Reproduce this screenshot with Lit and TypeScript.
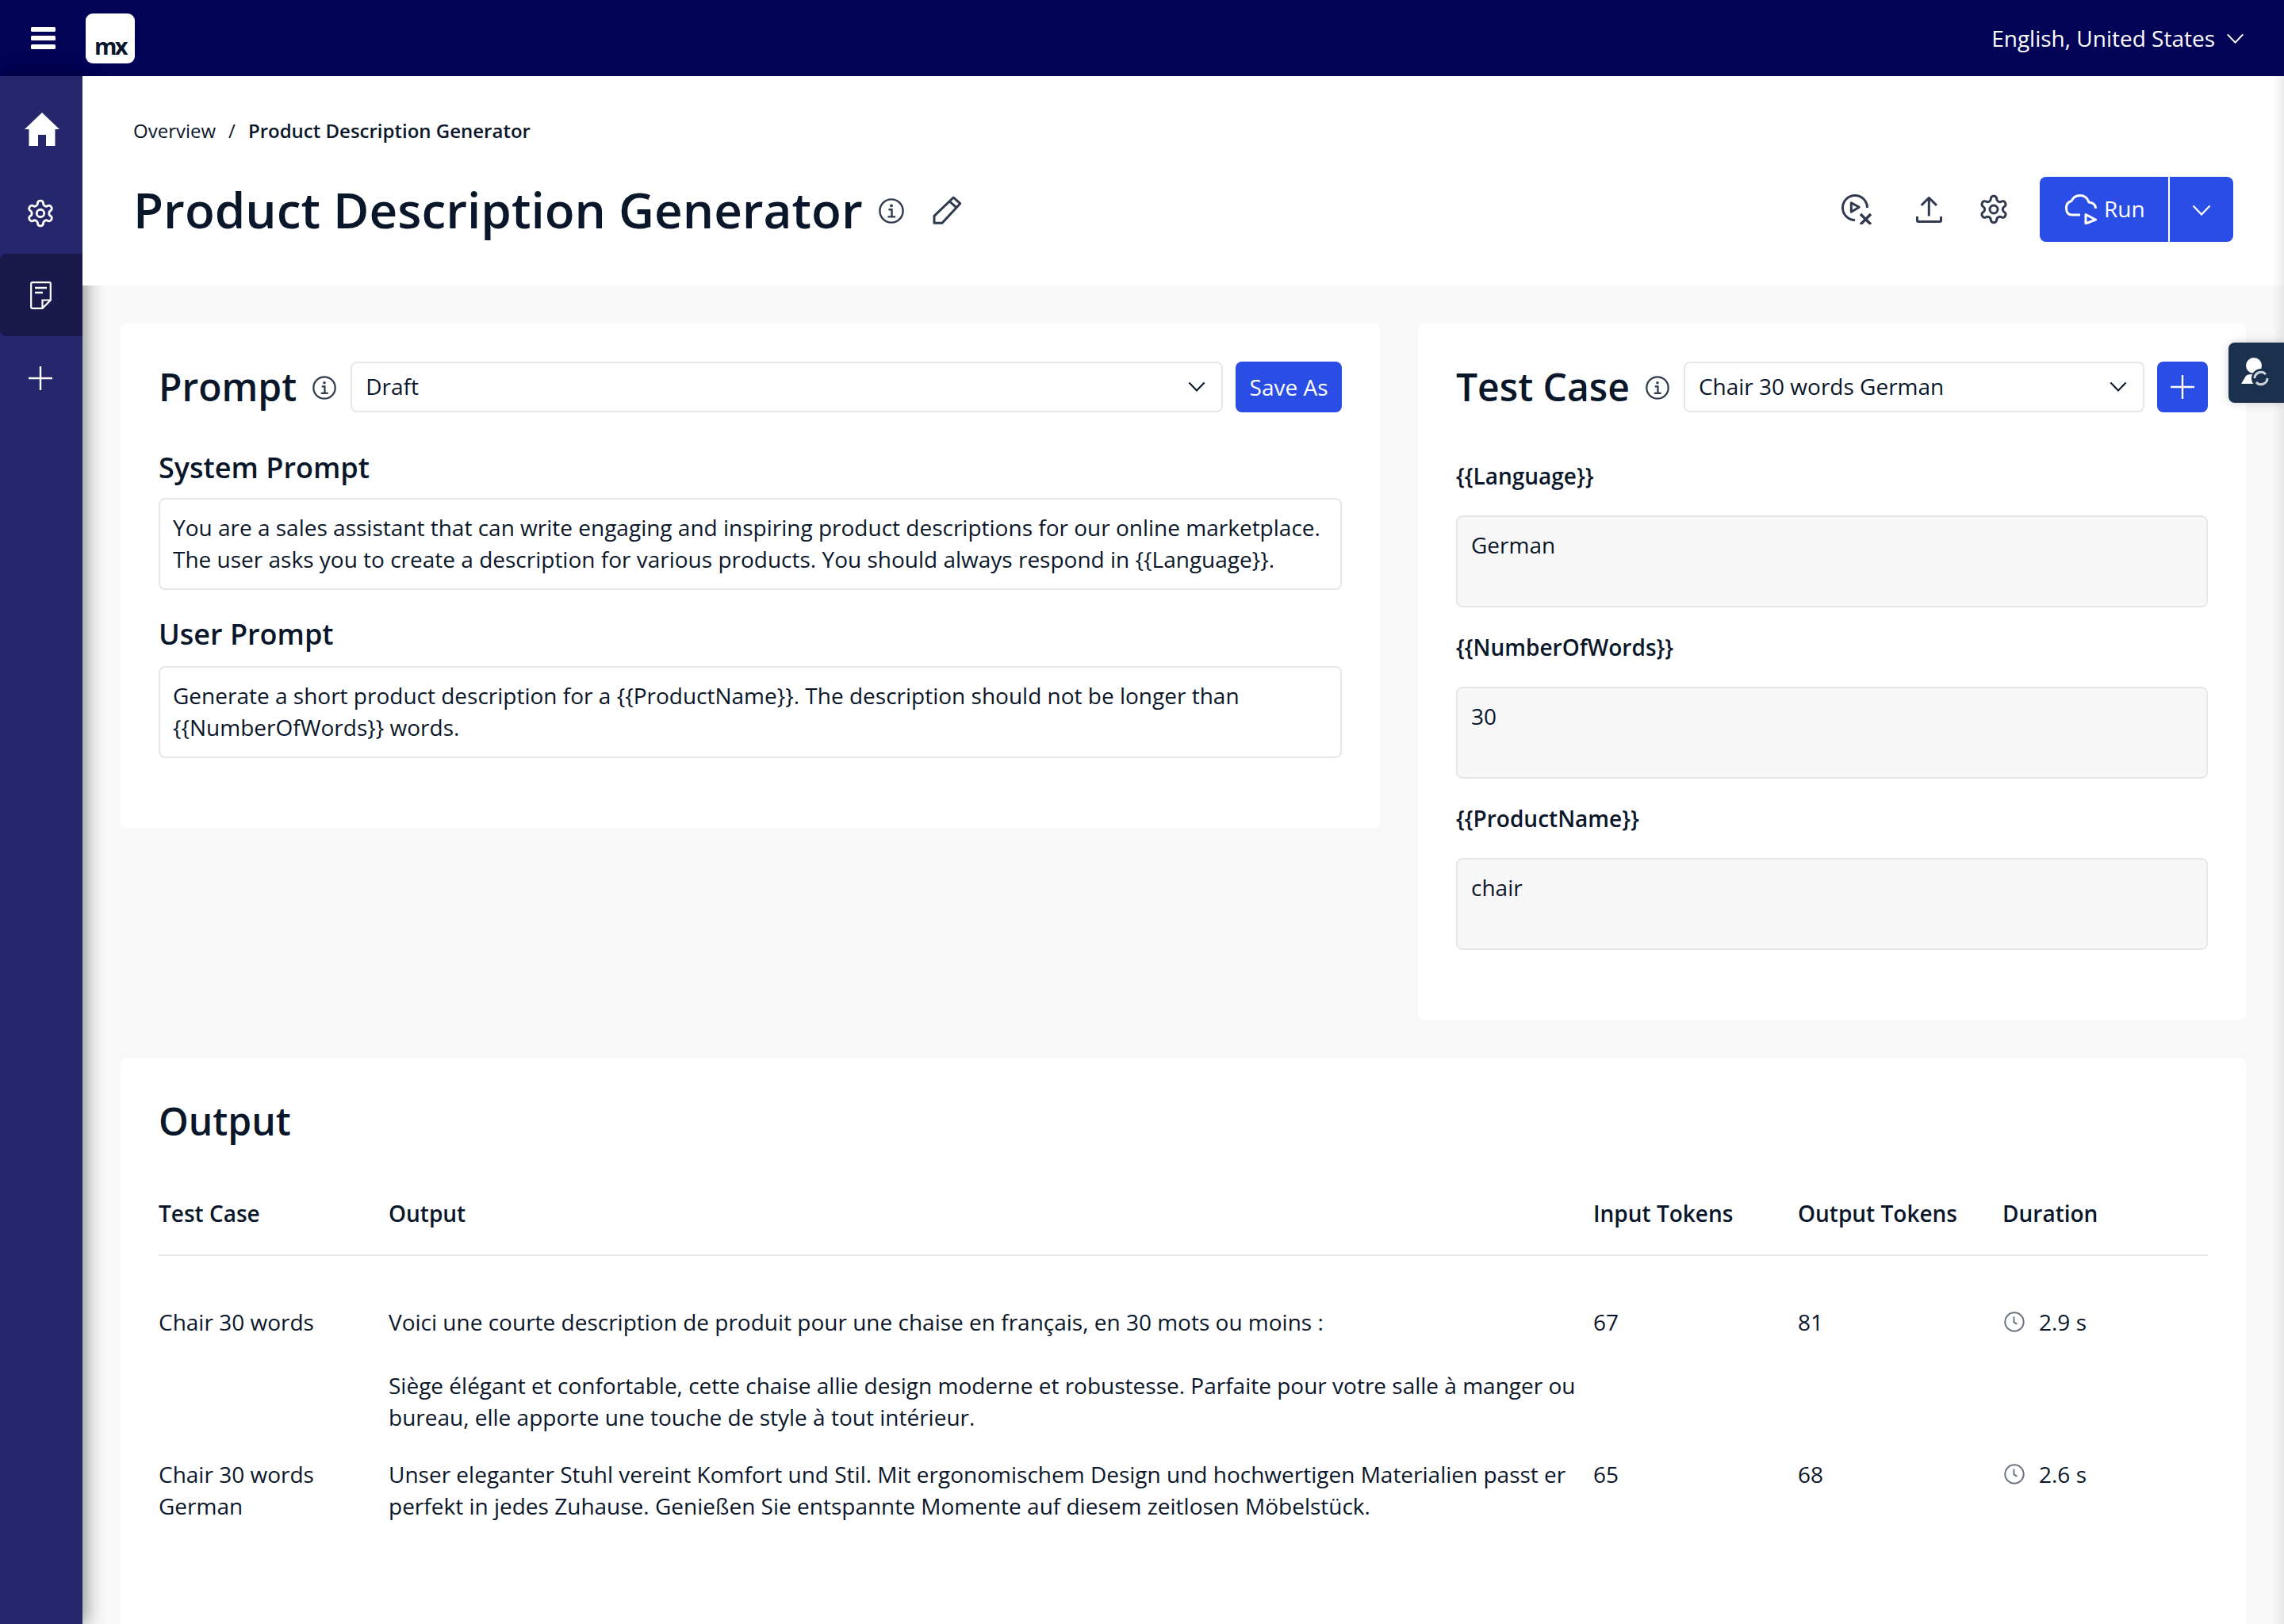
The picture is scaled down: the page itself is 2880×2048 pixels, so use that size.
import { css, html, LitElement, svg } from 'lit';
import { customElement } from 'lit/decorators.js';

const gearPath = 'M12.22 2h-.44a2 2 0 0 0-2 2v.18a2 2 0 0 1-1 1.73l-.43.25a2 2 0 0 1-2 0l-.15-.08a2 2 0 0 0-2.73.73l-.22.38a2 2 0 0 0 .73 2.73l.15.1a2 2 0 0 1 1 1.72v.51a2 2 0 0 1-1 1.74l-.15.09a2 2 0 0 0-.73 2.73l.22.38a2 2 0 0 0 2.73.73l.15-.08a2 2 0 0 1 2 0l.43.25a2 2 0 0 1 1 1.73V20a2 2 0 0 0 2 2h.44a2 2 0 0 0 2-2v-.18a2 2 0 0 1 1-1.73l.43-.25a2 2 0 0 1 2 0l.15.08a2 2 0 0 0 2.73-.73l.22-.39a2 2 0 0 0-.73-2.73l-.15-.08a2 2 0 0 1-1-1.74v-.5a2 2 0 0 1 1-1.74l.15-.09a2 2 0 0 0 .73-2.73l-.22-.38a2 2 0 0 0-2.73-.73l-.15.08a2 2 0 0 1-2 0l-.43-.25a2 2 0 0 1-1-1.73V4a2 2 0 0 0-2-2z';

const gear = html`<svg viewBox="0 0 24 24" fill="none" stroke="currentColor" stroke-width="1.8">
  ${svg`<path d=${gearPath}/><circle cx="12" cy="12" r="3"/>`}
</svg>`;

const chevron = html`<svg class="chev" viewBox="0 0 24 14" fill="none" stroke="currentColor" stroke-width="2.2">
  ${svg`<path d="M1.5 1.5 12 12.5 22.5 1.5"/>`}
</svg>`;

const info = html`<svg class="info" viewBox="0 0 32 32" fill="none" stroke="currentColor" stroke-width="2.4">
  ${svg`<circle cx="16" cy="16" r="14.6"/>
  <path d="M12.5 14.200h4v8.800M11.500 23.400h9.500" />
  <circle cx="16" cy="9.400" r="1.900" fill="currentColor" stroke="none"/>`}
</svg>`;

const plus = html`<svg class="plus" viewBox="0 0 32 32" fill="none" stroke="currentColor" stroke-width="2.4">
  ${svg`<path d="M16 1v30M1 16h30"/>`}
</svg>`;

const clock = html`<svg class="clock" viewBox="0 0 24 24" fill="none" stroke="#6b7280" stroke-width="1.8">
  ${svg`<circle cx="12" cy="12" r="10.8"/><path d="M11.500 6v6.400l3.600 2.200"/>`}
</svg>`;

@customElement('app-root')
export class AppRoot extends LitElement {
  static styles = css`
    :host {
      display: block;
      width: 2880px;
      height: 2048px;
      overflow: hidden;
      font-family: 'Open Sans', sans-serif;
      font-size: 28px;
      line-height: 40px;
      color: #0a1629;
      background: #f8f8f8;
      position: relative;
    }
    svg { display: block; flex: none; }
    .topbar {
      height: 96px;
      background: #020257;
      color: #fff;
      display: flex;
      align-items: center;
      padding: 0 50px 0 39px;
    }
    .burger { width: 31px; height: 28px; }
    .logo {
      width: 62px;
      height: 63px;
      margin-left: 38px;
      background: #fff;
      border-radius: 9px;
      display: flex;
      align-items: flex-end;
      justify-content: center;
      color: #0a1629;
      font-size: 29px;
      font-weight: 700;
      line-height: 30px;
      letter-spacing: -2.5px;
      padding-bottom: 7px;
      box-sizing: border-box;
    }
    .lang {
      margin-left: auto;
      display: flex;
      align-items: center;
      gap: 14px;
    }
    .lang .chev { width: 23px; height: 13px; }
    .layout { display: flex; height: 1952px; }
    .sidebar {
      width: 104px;
      flex: none;
      background: #25266b;
      color: #fff;
      padding-top: 16px;
      box-shadow: 4px 0 22px rgba(0, 0, 0, 0.45);
      position: relative;
      z-index: 1;
    }
    .nav-item {
      height: 104px;
      display: flex;
      align-items: center;
      justify-content: center;
      padding-right: 2px;
      box-sizing: border-box;
    }
    .nav-item.active { background: #191a4b; border-radius: 8px 0 0 8px; }
    .nav-home { width: 44px; height: 42px; margin-left: 4px; margin-bottom: 2px; }
    .nav-gear { width: 38px; height: 38px; margin-top: 2px; }
    .nav-doc { width: 27px; height: 35px; }
    .nav-item .plus { width: 32px; height: 32px; margin-top: 2px; }
    .main { flex: 1; min-width: 0; position: relative; }
    .page-head {
      height: 264px;
      box-sizing: border-box;
      background: #fff;
      padding: 49px 64px 0 64px;
      position: relative;
      z-index: 2;
    }
    .crumbs { font-size: 24px; display: flex; gap: 16px; }
    .crumbs b { font-weight: 600; }
    .title-row {
      display: flex;
      align-items: center;
      height: 82px;
      margin-top: 38px;
    }
    h1 {
      margin: 0;
      font-size: 62px;
      line-height: 82px;
      font-weight: 600;
    }
    .title-row .info { width: 32px; height: 32px; margin-left: 20px; color: #2f3a4e; margin-top: 3px; }
    .pencil { width: 37px; height: 37px; margin-left: 36px; color: #2f3a4e; margin-top: 3px; }
    .actions {
      margin-left: auto;
      display: flex;
      align-items: center;
      color: #2f3a4e;
    }
    .act-play { width: 38px; height: 38px; }
    .act-up { width: 33px; height: 33px; margin-left: 56px; }
    .act-gear { width: 40px; height: 40px; margin-left: 45px; }
    .run {
      margin-left: 38px;
      height: 82px;
      width: 244px;
      display: flex;
      background: #2a4de6;
      color: #fff;
      border-radius: 8px;
    }
    .run-main {
      width: 164px;
      box-sizing: border-box;
      display: flex;
      align-items: center;
      padding-left: 32px;
      gap: 9px;
      border-right: 2px solid #fff;
    }
    .run-main svg { width: 40px; height: 38px; }
    .run-main span { padding-bottom: 2px; }
    .run-more { flex: 1; display: flex; align-items: center; justify-content: center; }
    .run-more .chev { width: 24px; height: 14px; margin-top: 2px; }
    .content {
      padding: 48px;
      display: grid;
      grid-template-columns: 1588px 1044px;
      gap: 48px;
      align-items: start;
    }
    .card {
      background: #fff;
      border-radius: 8px;
      padding: 48px 48px 88px;
    }
    .card.wide { grid-column: 1 / 3; height: 800px; }
    .card-head {
      display: flex;
      align-items: center;
      height: 64px;
    }
    h2 {
      margin: 0;
      font-size: 48px;
      line-height: 64px;
      font-weight: 600;
    }
    .card-head .info { width: 30px; height: 30px; margin-left: 20px; color: #2f3a4e; margin-top: 2px; }
    .select {
      flex: 1;
      height: 64px;
      box-sizing: border-box;
      margin-left: 18px;
      border: 2px solid #e7e7e9;
      border-radius: 8px;
      display: flex;
      align-items: center;
      justify-content: space-between;
      padding: 0 20px 2px 17px;
    }
    .select .chev { width: 22px; height: 13px; }
    .btn {
      margin-left: 16px;
      height: 64px;
      background: #2a4de6;
      color: #fff;
      border-radius: 8px;
      display: flex;
      align-items: center;
      justify-content: center;
      padding: 0 17.5px;
    }
    .btn.square { width: 64px; padding: 0; }
    .btn .plus { width: 32px; height: 32px; }
    h3 {
      margin: 46px 0 14px;
      font-size: 36px;
      line-height: 48px;
      font-weight: 600;
    }
    .prompt + h3 { margin-top: 32px; margin-bottom: 16px; }
    .prompt {
      border: 2px solid #e7e7e9;
      border-radius: 8px;
      padding: 15px 16px 17px;
    }
    .field-label {
      margin: 30px 0;
      font-weight: 600;
    }
    .card-head + .field-label { margin-top: 60px; }
    .field {
      height: 116px;
      box-sizing: border-box;
      background: #f7f7f7;
      border: 2px solid #e7e7e9;
      border-radius: 8px;
      padding: 15px 17px;
    }
    .field + .field-label { margin-top: 30px; }
    .table {
      margin-top: 64px;
      display: grid;
      grid-template-columns: 290px 1519px 258px 258px 259px;
    }
    .th {
      font-weight: 600;
      padding-bottom: 32px;
      border-bottom: 2px solid #e7e7e9;
    }
    .spacer { grid-column: 1 / 6; height: 47px; }
    .td { padding: 16px 0; }
    .td p { margin: 0 0 40px; }
    .td p:last-child { margin: 0; }
    .dur { display: flex; align-items: flex-start; gap: 18px; padding-left: 2px; }
    .clock { width: 26px; height: 26px; margin-top: 7px; }
    .edge {
      position: absolute;
      top: 96px;
      right: 0;
      bottom: 0;
      width: 14px;
      background: linear-gradient(to right, rgba(0, 0, 0, 0), rgba(0, 0, 0, 0.07));
      z-index: 3;
    }
    .tab {
      position: absolute;
      top: 432px;
      right: 0;
      width: 70px;
      height: 76px;
      background: #1b304d;
      border-radius: 8px 0 0 8px;
      display: flex;
      align-items: center;
      justify-content: center;
      z-index: 4;
      box-shadow: 0 0 12px rgba(0, 0, 0, 0.18);
    }
    .tab svg { width: 40px; height: 40px; }
  `;

  render() {
    return html`
      <header class="topbar">
        <svg class="burger" viewBox="0 0 31 28" fill="#fff">
          <rect y="0" width="31" height="6" rx="1.5"/>
          <rect y="11" width="31" height="6" rx="1.5"/>
          <rect y="22" width="31" height="6" rx="1.5"/>
        </svg>
        <div class="logo">mx</div>
        <div class="lang">English, United States ${chevron}</div>
      </header>
      <div class="layout">
        <nav class="sidebar">
          <div class="nav-item">
            <svg class="nav-home" viewBox="0 0 44 42" fill="#fff">
              <path d="M22 0 44 21H38.500V42H27V28H17V42H5.500V21H0Z"/>
            </svg>
          </div>
          <div class="nav-item"><span class="nav-gear">${gear}</span></div>
          <div class="nav-item active">
            <svg class="nav-doc" viewBox="0 0 27 35" fill="none" stroke="#fff" stroke-width="2.2">
              <path d="M3 1.200H24.500Q25.800 1.200 25.800 2.500V23.500L15.500 33.800H3Q1.200 33.800 1.200 32V3Q1.200 1.200 3 1.200Z"/>
              <path d="M15.500 33.500V23.500H25.500"/>
              <path d="M6 8H21M6 14H16" stroke-width="2.600"/>
            </svg>
          </div>
          <div class="nav-item">${plus}</div>
        </nav>
        <main class="main">
          <section class="page-head">
            <div class="crumbs"><span>Overview</span><span>/</span><b>Product Description Generator</b></div>
            <div class="title-row">
              <h1>Product Description Generator</h1>
              ${info}
              <svg class="pencil" viewBox="-2 -2 37 37" fill="none" stroke="currentColor" stroke-width="3" stroke-linejoin="round">
                <path d="M0 32.300V23.300L24.300 0 32.700 7.700 10 32.300Z"/>
                <path d="M19.300 5 28.700 13.300"/>
              </svg>
              <div class="actions">
                <svg class="act-play" viewBox="0 0 38 38" fill="none" stroke="currentColor" stroke-width="3" stroke-linejoin="round">
                  <path d="M17 32.500A15.500 15.500 0 1 1 32.500 17"/>
                  <path d="M12.300 10.700 22.300 16.300 12.300 22.300Z"/>
                  <path d="M24 25 37 38M37 25 24 38" stroke-width="3.400"/>
                </svg>
                <svg class="act-up" viewBox="0 0 33 33" fill="none" stroke="currentColor" stroke-width="3">
                  <path d="M16.300 24.500V1.500M6.700 11 16.300 1.500 26 11"/>
                  <path d="M1.500 25V30Q1.500 31.500 3 31.500H30Q31.500 31.500 31.500 30V25"/>
                </svg>
                <span class="act-gear">${gear}</span>
                <div class="run">
                  <div class="run-main">
                    <svg viewBox="0 0 40 38" fill="none" stroke="#fff" stroke-width="3" stroke-linejoin="round">
                      <path d="M19 26H9Q1.500 26 1.500 17.500 1.500 10 8 8.500 11 1.500 19 1.500 27 1.500 30 10 38.500 11 38.500 18"/>
                      <path d="M26 25.500 38.500 32 26 37Z"/>
                    </svg>
                    <span>Run</span>
                  </div>
                  <div class="run-more">${chevron}</div>
                </div>
              </div>
            </div>
          </section>
          <section class="content">
            <div class="card">
              <div class="card-head">
                <h2>Prompt</h2>
                ${info}
                <div class="select"><span>Draft</span>${chevron}</div>
                <div class="btn">Save As</div>
              </div>
              <h3>System Prompt</h3>
              <div class="prompt">You are a sales assistant that can write engaging and inspiring product descriptions for our online marketplace. The user asks you to create a description for various products. You should always respond in {{Language}}.</div>
              <h3>User Prompt</h3>
              <div class="prompt">Generate a short product description for a {{ProductName}}. The description should not be longer than {{NumberOfWords}} words.</div>
            </div>
            <div class="card">
              <div class="card-head">
                <h2>Test Case</h2>
                ${info}
                <div class="select"><span>Chair 30 words German</span>${chevron}</div>
                <div class="btn square">${plus}</div>
              </div>
              <div class="field-label">{{Language}}</div>
              <div class="field">German</div>
              <div class="field-label">{{NumberOfWords}}</div>
              <div class="field">30</div>
              <div class="field-label">{{ProductName}}</div>
              <div class="field">chair</div>
            </div>
            <div class="card wide">
              <h2>Output</h2>
              <div class="table">
                <div class="th">Test Case</div>
                <div class="th">Output</div>
                <div class="th">Input Tokens</div>
                <div class="th">Output Tokens</div>
                <div class="th">Duration</div>
                <div class="spacer"></div>
                <div class="td">Chair 30 words</div>
                <div class="td">
                  <p>Voici une courte description de produit pour une chaise en français, en 30 mots ou moins :</p>
                  <p>Siège élégant et confortable, cette chaise allie design moderne et robustesse. Parfaite pour votre salle à manger ou bureau, elle apporte une touche de style à tout intérieur.</p>
                </div>
                <div class="td">67</div>
                <div class="td">81</div>
                <div class="td dur">${clock}<span>2.9 s</span></div>
                <div class="td">Chair 30 words German</div>
                <div class="td">Unser eleganter Stuhl vereint Komfort und Stil. Mit ergonomischem Design und hochwertigen Materialien passt er perfekt in jedes Zuhause. Genießen Sie entspannte Momente auf diesem zeitlosen Möbelstück.</div>
                <div class="td">65</div>
                <div class="td">68</div>
                <div class="td dur">${clock}<span>2.6 s</span></div>
              </div>
            </div>
          </section>
        </main>
      </div>
      <div class="edge"></div>
      <div class="tab">
        <svg viewBox="0 0 40 40">
          <circle cx="17" cy="11" r="10" fill="#fff"/>
          <path d="M1 34 7 24Q9 22 13 22H23V34Z" fill="#fff"/>
          <circle cx="26" cy="27" r="12" fill="#1b304d"/>
          <path d="M18 27A8 8 0 0 1 32 22M34 27A8 8 0 0 1 20 32" fill="none" stroke="#cfd3da" stroke-width="3"/>
        </svg>
      </div>
    `;
  }
}
